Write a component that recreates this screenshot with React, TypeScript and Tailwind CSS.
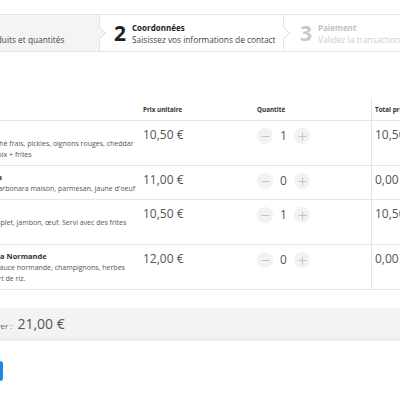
import React from 'react';
import clsx from 'clsx';

type StepState = 'done' | 'active' | 'todo';

const Step: React.FC<{ n: number; title: string; sub: string; state: StepState; className: string; chevron?: boolean }> = ({
    n,
    title,
    sub,
    state,
    className,
    chevron,
}) => {
    const muted = state === 'todo';
    return (
        <div
            className={clsx(
                'relative flex shrink-0 items-center gap-[6px] border-r border-[#e6e6e6]',
                state === 'done' ? 'bg-[#f4f4f4]' : 'bg-white',
                className
            )}
        >
            <span className={clsx('text-[21px] font-bold leading-none', muted ? 'text-[#c9c9c9]' : 'text-[#222]')}>{n}</span>
            <div className="flex flex-col whitespace-nowrap">
                <span className={clsx('text-[8px] font-bold leading-[12px]', muted ? 'text-[#c2c2c2]' : 'text-[#222]')}>{title}</span>
                <span className={clsx('text-[8.3px] leading-[11px]', muted ? 'text-[#cccccc]' : 'text-[#444]')}>{sub}</span>
            </div>
            {chevron && (
                <span
                    className={clsx(
                        'absolute right-[-5px] top-1/2 z-10 h-[10px] w-[10px] -translate-y-1/2 rotate-45 border-t border-r border-[#e3e3e3]',
                        state === 'done' ? 'bg-[#f4f4f4]' : 'bg-white'
                    )}
                />
            )}
        </div>
    );
};

const Qty: React.FC<{ value: number }> = ({ value }) => (
    <div className="flex items-center gap-[4px]">
        <button className="flex h-[16px] w-[16px] items-center justify-center rounded-full bg-[#f2f2f2]">
            <svg width="9" height="9" viewBox="0 0 9 9">
                <line x1="0.5" y1="4.5" x2="8.5" y2="4.5" stroke="#c4c4c4" strokeWidth="1" />
            </svg>
        </button>
        <span className="w-[13px] text-center text-[12px] leading-[16px] text-[#555]">{value}</span>
        <button className="flex h-[16px] w-[16px] items-center justify-center rounded-full bg-[#f2f2f2]">
            <svg width="9" height="9" viewBox="0 0 9 9">
                <line x1="0.5" y1="4.5" x2="8.5" y2="4.5" stroke="#c4c4c4" strokeWidth="1" />
                <line x1="4.5" y1="0.5" x2="4.5" y2="8.5" stroke="#c4c4c4" strokeWidth="1" />
            </svg>
        </button>
    </div>
);

const products = [
    {
        name: 'Cheeseburger',
        lines: ['Brioche, steak haché frais, pickles, oignons rouges, cheddar', 'Sauce de votre choix + frites'],
        price: '10,50 €',
        qty: 1,
        total: '10,50 €',
    },
    {
        name: 'Pâtes Carbonara',
        lines: ['Spaghetti, sauce carbonara maison, parmesan, jaune d\'oeuf'],
        price: '11,00 €',
        qty: 0,
        total: '0,00 €',
    },
    {
        name: 'Croque',
        lines: ['Pain de seigle complet, jambon, œuf. Servi avec des frites', 'et salade.'],
        price: '10,50 €',
        qty: 1,
        total: '10,50 €',
    },
    {
        name: 'Poulet braisé à la Normande',
        lines: ['Escalope poêlée, sauce normande, champignons, herbes', 'fraîches et une part de riz.'],
        price: '12,00 €',
        qty: 0,
        total: '0,00 €',
    },
];

export default function App() {
    return (
        <div className="h-[400px] w-[400px] overflow-hidden bg-white font-['Open_Sans',sans-serif] text-[#333]">
            <div className="mt-[14px] -ml-[100px] flex h-[38px] w-[600px] border-y border-[#e6e6e6]">
                <Step n={1} title="Produits" sub="Choisissez vos produits et quantités" state="done" className="w-[200px] pl-[8px]" chevron />
                <Step n={2} title="Coordonnées" sub="Saisissez vos informations de contact" state="active" className="w-[184px] pl-[14px]" chevron />
                <Step n={3} title="Paiement" sub="Validez la transaction et payez" state="todo" className="flex-1 pl-[16px]" />
            </div>

            <div className="mt-[46px] -ml-[64px] w-[600px]">
                <div className="flex h-[23px] border-b border-[#e6e6e6] text-[6.3px] font-bold text-[#333]">
                    <div className="w-[203px] shrink-0 pl-[4px]" />
                    <div className="flex w-[114px] shrink-0 items-end pb-[6px] pl-[4px]">Prix unitaire</div>
                    <div className="flex w-[118px] shrink-0 items-end pb-[6px] pl-[4px]">Quantité</div>
                    <div className="flex flex-1 items-end border-l border-[#e6e6e6] pb-[6px] pl-[3px] whitespace-nowrap">Total produit</div>
                </div>
                {products.map((p) => (
                    <div key={p.name} className="flex border-b border-[#e6e6e6]">
                        <div className="flex w-[203px] shrink-0 flex-col justify-center py-[5px] pl-[4px] whitespace-nowrap">
                            <span className="text-[7.5px] font-bold leading-[12px] text-[#333]">{p.name}</span>
                            {p.lines.map((l) => (
                                <span key={l} className="text-[7px] leading-[11px] text-[#555]">
                                    {l}
                                </span>
                            ))}
                        </div>
                        <div className="w-[114px] shrink-0 pl-[4px] pt-[6px] text-[12px] leading-[16px] text-[#555]">{p.price}</div>
                        <div className="w-[118px] shrink-0 pl-[4px] pt-[7px]">
                            <Qty value={p.qty} />
                        </div>
                        <div className="flex-1 border-l border-[#e6e6e6] pl-[3px] pt-[6px] text-[12px] leading-[16px] whitespace-nowrap text-[#555]">
                            {p.total}
                        </div>
                    </div>
                ))}
            </div>

            <div className="mt-[18px] h-[33px] border-b-[4px] border-[#ececec] bg-[#f3f3f3]">
                <div className="-ml-[40px] flex h-full items-baseline gap-[5px] pt-[7px] whitespace-nowrap">
                    <span className="text-[8px] text-[#666]">Total à payer :</span>
                    <span className="text-[14px] leading-[18px] text-[#555]">21,00 €</span>
                </div>
            </div>

            <button className="mt-[20px] -ml-[80px] h-[20px] w-[83px] rounded-[3px] bg-[#1e88e5] text-[9px] font-bold text-white">
                Valider
            </button>
        </div>
    );
}
